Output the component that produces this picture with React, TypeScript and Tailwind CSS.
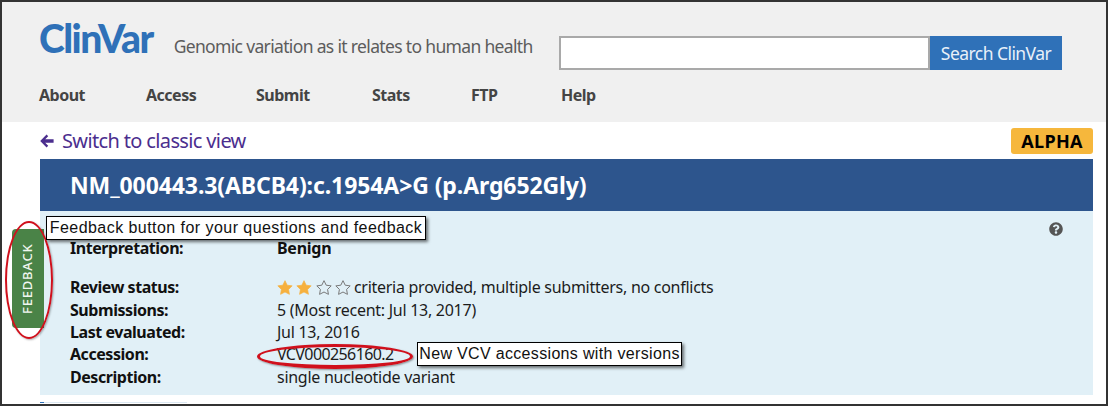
import React from 'react';
import { FaQuestionCircle } from 'react-icons/fa';

const navItems = [
  { label: 'About', width: 'w-[107px]' },
  { label: 'Access', width: 'w-[110px]' },
  { label: 'Submit', width: 'w-[116px]' },
  { label: 'Stats', width: 'w-[99px]' },
  { label: 'FTP', width: 'w-[90px]' },
  { label: 'Help', width: 'w-[60px]' },
];

const Row = ({ label, children }: { label: string; children: React.ReactNode }) => (
  <div className="flex h-[22.3px] items-center">
    <div className="w-[207px] font-bold tracking-[-0.45px] text-[#111]">{label}</div>
    <div className="flex items-center text-[#1c1c1c]">{children}</div>
  </div>
);

const Star = ({ filled }: { filled: boolean }) => (
  <svg viewBox="0 0 24 23" className="h-[15px] w-[16px]">
    <path
      d="M12 1 L15.4 8 L23 9 L17.5 14.4 L18.8 22 L12 18.4 L5.2 22 L6.5 14.4 L1 9 L8.6 8 Z"
      fill={filled ? '#f6b03e' : 'none'}
      stroke={filled ? '#f6b03e' : '#777'}
      strokeWidth={filled ? 1 : 1.5}
      strokeLinejoin="round"
    />
  </svg>
);

const Callout = ({ className, children }: { className: string; children: React.ReactNode }) => (
  <div
    className={`absolute flex items-center justify-center whitespace-nowrap border border-black bg-white text-[16px] text-[#111] shadow-[2px_2px_3px_rgba(0,0,0,0.55)] ${className}`}
    style={{ fontFamily: '"Liberation Sans", Arial, sans-serif' }}
  >
    {children}
  </div>
);

export default function App() {
  return (
    <div
      className="relative h-[406px] w-[1108px] overflow-hidden border-2 border-[#333] bg-white"
      style={{ fontFamily: '"Noto Sans", "Open Sans", sans-serif' }}
    >
      {/* Header */}
      <header className="h-[120px] bg-[#f0f0f0] pl-[37px]">
        <div className="flex h-[68px] items-start">
          <div className="flex w-[520px] items-baseline pt-[11px]">
            <span className="text-[39px] font-black leading-[50px] tracking-[-1.5px] text-[#2f71b8]" style={{ fontFamily: 'Lato, sans-serif' }}>
              ClinVar
            </span>
            <span className="ml-[21px] whitespace-nowrap text-[17.5px] tracking-[-0.66px] text-[#5c5c5c]">
              Genomic variation as it relates to human health
            </span>
          </div>
          <div className="mt-[34px] flex h-[34px]">
            <input className="h-full w-[371px] rounded-none border-2 border-[#a9a9a9] bg-white" aria-label="Search" />
            <button className="h-full w-[132px] rounded-none bg-[#2f71b8] text-[17.5px] tracking-[-0.55px] text-[#e8f0f8]">
              Search ClinVar
            </button>
          </div>
        </div>
        <nav className="flex pt-[14px]">
          {navItems.map((item) => (
            <div key={item.label} className={`${item.width} text-[16px] font-bold leading-[22px] tracking-[-0.5px] text-[#444]`}>
              {item.label}
            </div>
          ))}
        </nav>
      </header>

      {/* Main content */}
      <main className="pl-[38px] pr-[13px]">
        <div className="flex h-[37px] items-start justify-between">
          <div className="flex items-center pt-[6px] text-[#4b2e8e]">
            <svg viewBox="0 0 14 14" className="mr-[8px] h-[14px] w-[14px]" fill="currentColor">
              <path d="M6.6 0.6 L8.2 2.2 L5.2 5.3 L13.6 5.3 L13.6 8.7 L5.2 8.7 L8.2 11.8 L6.6 13.4 L0.2 7 Z" />
            </svg>
            <span className="text-[20px] leading-[26px] tracking-[-0.64px]">Switch to classic view</span>
          </div>
          <div className="mt-[6px] flex h-[26px] w-[82px] items-center justify-center rounded-[3px] bg-[#f6b73c] text-[18px] font-bold tracking-[0.3px] text-black">
            ALPHA
          </div>
        </div>
        <div className="flex h-[52px] items-center bg-[#2d558d] pl-[30px] text-[23px] font-bold tracking-[-0.1px] text-white">
          NM_000443.3(ABCB4):c.1954A&gt;G (p.Arg652Gly)
        </div>
        <section className="relative h-[184px] bg-[#e1f0f7] pl-[30px] pt-[26px] text-[16px] tracking-[-0.27px]">
          <Row label="Interpretation:">
            <span className="font-bold text-[#111]">Benign</span>
          </Row>
          <div className="h-[17px]" />
          <Row label="Review status:">
            <span className="mr-[3px] flex gap-[3.3px]">
              <Star filled />
              <Star filled />
              <Star filled={false} />
              <Star filled={false} />
            </span>
            criteria provided, multiple submitters, no conflicts
          </Row>
          <Row label="Submissions:">5 (Most recent: Jul 13, 2017)</Row>
          <Row label="Last evaluated:">Jul 13, 2016</Row>
          <Row label="Accession:">
            <span className="tracking-[-0.6px]">VCV000256160.2</span>
          </Row>
          <Row label="Description:">single nucleotide variant</Row>
          <FaQuestionCircle className="absolute right-[30px] top-[11px] h-[14px] w-[14px] text-[#555]" />
        </section>
        <div className="mt-[7px] flex h-px w-[147px] bg-[#dce8f2]">
          <div className="h-px w-[4px] bg-[#2f71b8]" />
        </div>
      </main>

      {/* Feedback tab and annotations drawn over the page */}
      <div className="absolute left-[10px] top-[227px] flex h-[99px] w-[32px] items-center justify-center rounded-l-[4px] bg-[#4a8347]">
        <span className="-rotate-90 whitespace-nowrap text-[13px] font-medium tracking-[0.8px] text-[#f2f7f1]">FEEDBACK</span>
      </div>
      <div className="absolute left-[3px] top-[219px] h-[118px] w-[48px] rounded-[50%] border-2 border-[#d0101c] shadow-[1px_1px_2px_rgba(0,0,0,0.3)]" />
      <div className="absolute left-[255px] top-[342px] h-[25px] w-[156px] rounded-[50%] border-[3px] border-b-[4px] border-[#d0101c] shadow-[1px_1px_2px_rgba(0,0,0,0.4)]" />
      <Callout className="left-[44px] top-[214px] h-[24px] w-[380px] tracking-[0.45px]">Feedback button for your questions and feedback</Callout>
      <Callout className="left-[415px] top-[340px] h-[24px] w-[265px] tracking-[0.33px]">New VCV accessions with versions</Callout>
    </div>
  );
}
